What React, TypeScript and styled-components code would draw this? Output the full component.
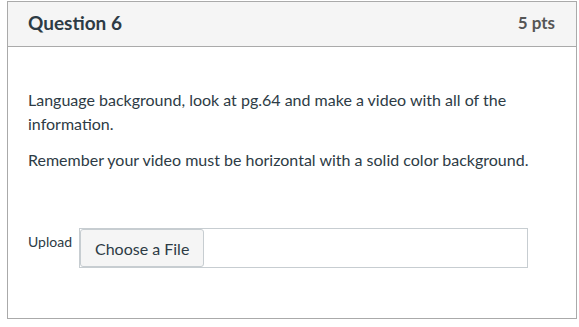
import styled, { createGlobalStyle } from "styled-components"

const GlobalStyle = createGlobalStyle`
    body {
        margin: 0;
        padding: 1px 3px 0 7px;
        background: #fff;
        font-family: Lato, "Helvetica Neue", Arial, sans-serif;
        color: #2d3b45;
    }
`

const Card = styled.div`
    width: 570px;
    height: 318px;
    box-sizing: border-box;
    border: 1px solid #aaaaaa;
    display: flex;
    flex-direction: column;
`

const Header = styled.div`
    height: 45px;
    box-sizing: border-box;
    background: #f5f5f5;
    border-bottom: 1px solid #aaaaaa;
    display: flex;
    align-items: center;
    justify-content: space-between;
    padding: 0 21px 4px 20px;
`

const Title = styled.span`
    font-size: 19px;
    font-weight: bold;
    color: #2d3b45;
`

const Points = styled.span`
    font-size: 17px;
    font-weight: bold;
    color: #555555;
`

const Body = styled.div`
    padding: 41px 20px 0 20px;
    display: flex;
    flex-direction: column;
`

const Paragraph = styled.p`
    margin: 0 0 12px 0;
    font-size: 16px;
    line-height: 24px;
`

const UploadRow = styled.div`
    margin-top: 44px;
    display: flex;
    align-items: flex-start;
    gap: 7px;
`

const Label = styled.span`
    font-size: 14px;
    line-height: 16px;
    padding-top: 6px;
`

const FileBox = styled.div`
    width: 449px;
    height: 40px;
    box-sizing: border-box;
    border: 1px solid #c7cdd1;
    display: flex;
`

const ChooseButton = styled.button`
    height: 38px;
    padding: 0 14px;
    background: #f5f5f5;
    border: 1px solid #c7cdd1;
    border-radius: 3px;
    margin: 0;
    font-family: inherit;
    font-size: 16px;
    color: #2d3b45;
`

const App = () => {
    return (
        <>
            <GlobalStyle />
            <Card>
                <Header>
                    <Title>Question 6</Title>
                    <Points>5 pts</Points>
                </Header>
                <Body>
                    <Paragraph>
                        Language background, look at pg.64 and make a video with all of the information.
                    </Paragraph>
                    <Paragraph>
                        Remember your video must be horizontal with a solid color background.
                    </Paragraph>
                    <UploadRow>
                        <Label>Upload</Label>
                        <FileBox>
                            <ChooseButton>Choose a File</ChooseButton>
                        </FileBox>
                    </UploadRow>
                </Body>
            </Card>
        </>
    )
}

export default App
